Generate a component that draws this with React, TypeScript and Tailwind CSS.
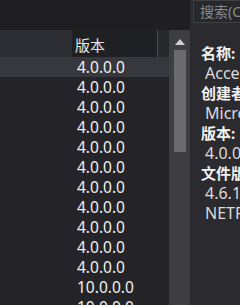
import React from "react";

const rows = [
  "4.0.0.0","4.0.0.0","4.0.0.0","4.0.0.0","4.0.0.0","4.0.0.0",
  "4.0.0.0","4.0.0.0","4.0.0.0","4.0.0.0","4.0.0.0","10.0.0.0","10.0.0.0",
];

const font = { fontFamily: '"Noto Sans", "Noto Sans CJK SC", sans-serif' };

export default function App() {
  return (
    <div className="w-[240px] h-[305px] flex overflow-hidden bg-[#2b2b2f]" style={font}>
      <div className="w-[190px] flex flex-col shrink-0">
        <div className="h-[30px] bg-[#1f1f22] shrink-0" />
        <div className="flex flex-1 min-h-0">
          <div className="w-[169px] flex flex-col bg-[#242428] overflow-hidden">
            <div className="h-[27px] flex shrink-0">
              <div className="w-[72px] bg-[#2d2e33]" />
              <div className="w-[85px] bg-[#1f2023] flex items-center pl-[3px] pt-[3px] text-[15px] text-[#e6e6e6] leading-none">版本</div>
              <div className="w-px bg-[#4a4a4e]" />
              <div className="flex-1 bg-[#27282c]" />
            </div>
            {rows.map((r, i) => (
              <div
                key={i}
                className={`h-[20px] shrink-0 flex items-center pl-[77px] pt-[2px] text-[15.5px] leading-none text-[#f0f0f0] ${i === 0 ? "bg-[#37383d]" : ""}`}
              >
                {r}
              </div>
            ))}
          </div>
          <div className="w-[21px] bg-[#3e3e42] flex flex-col items-center">
            <svg width="10" height="6" viewBox="0 0 10 6" className="mt-[9px]">
              <polygon points="5,0 10,6 0,6" fill="#d0d0d0" />
            </svg>
            <div className="w-[12px] h-[102px] bg-[#6b6b6e] mt-[5px]" />
          </div>
        </div>
      </div>
      <div className="flex-1 flex flex-col min-w-0">
        <div className="h-[23px] ml-[3px] border border-[#3f3f46] bg-[#28282c] flex items-center pl-[6px] text-[14px] text-[#8a8a8a] whitespace-nowrap overflow-hidden border-r-0">
          搜索(C
        </div>
        <div className="mt-[20px] flex flex-col text-[15px] leading-[20px] whitespace-nowrap pl-[11px]">
          <div className="font-bold text-[#f2f2f2]">名称:</div>
          <div className="pl-[4px] text-[16px] text-[#dcdcdc]">Accessibility</div>
          <div className="font-bold text-[#f2f2f2]">创建者:</div>
          <div className="pl-[4px] text-[16px] text-[#dcdcdc]">Microsoft</div>
          <div className="font-bold text-[#f2f2f2]">版本:</div>
          <div className="pl-[4px] text-[16px] text-[#dcdcdc]">4.0.0.0</div>
          <div className="font-bold text-[#f2f2f2]">文件版本:</div>
          <div className="pl-[4px] text-[16px] text-[#dcdcdc]">4.6.1055.0</div>
          <div className="pl-[4px] text-[16px] text-[#dcdcdc]">NETFramework</div>
        </div>
      </div>
    </div>
  );
}
